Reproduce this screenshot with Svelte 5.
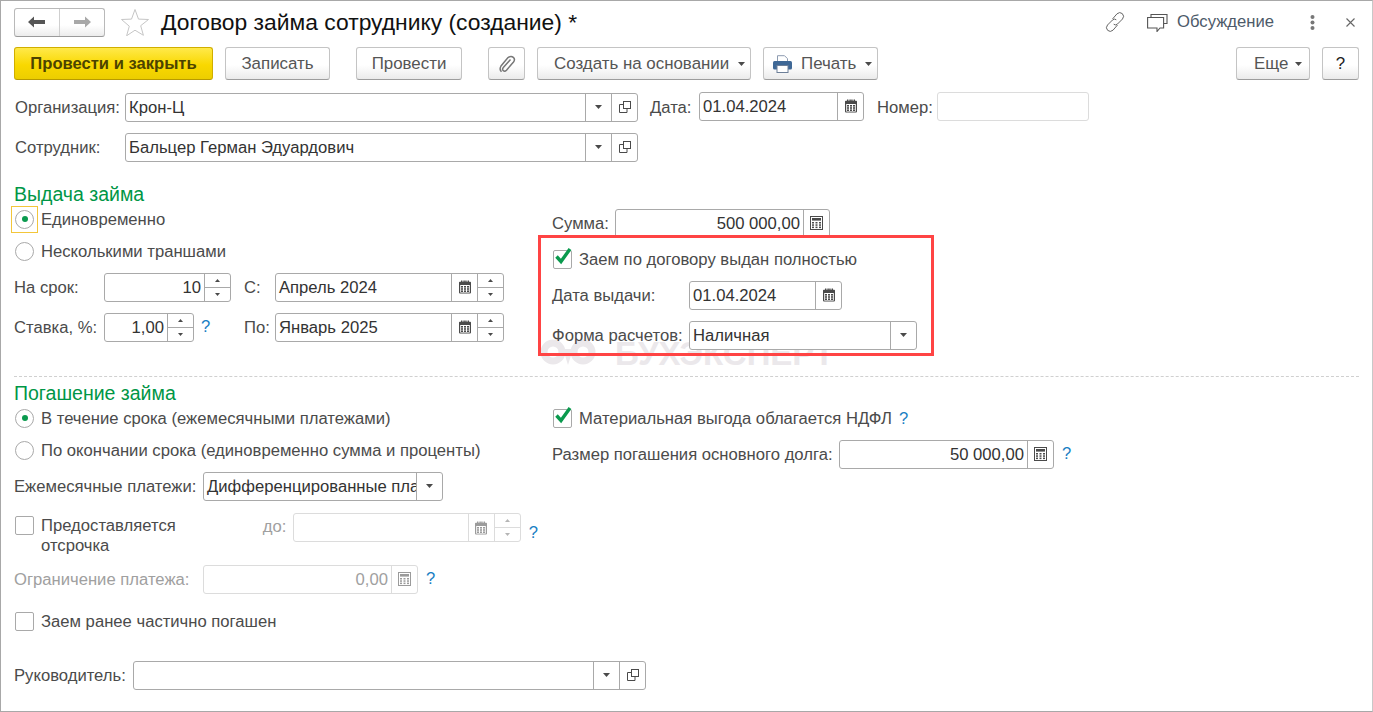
<script>
  const tm = 'Единовременно';
</script>

{#snippet caret(c = '#4a4a4a')}
  <svg class="ic" width="7" height="4" viewBox="0 0 7 4"><path d="M0 0h7L3.5 4z" fill={c}/></svg>
{/snippet}
{#snippet cal(c = '#4a4a4a')}
  <svg class="ic" width="14" height="14" viewBox="0 0 14 14"><path fill={c} d="M1 2.5q0-.8.8-.8H3V.5h1.4v1.2h1V.5h1.4v1.2h.5V.5h1.3v1.2h1V.5H11v1.2h1.2q.8 0 .8.8v10q0 1-1 1H2q-1 0-1-1z"/><g fill="#fff"><rect x="2.2" y="5" width="9.6" height="7.6"/></g><g fill={c}><rect x="3" y="6" width="2" height="1.6"/><rect x="6" y="6" width="2" height="1.6"/><rect x="9" y="6" width="2" height="1.6"/><rect x="3" y="8.2" width="2" height="1.6"/><rect x="6" y="8.2" width="2" height="1.6"/><rect x="9" y="8.2" width="2" height="1.6"/><rect x="3" y="10.4" width="2" height="1.6"/><rect x="6" y="10.4" width="2" height="1.6"/><rect x="9" y="10.4" width="2" height="1.6"/></g></svg>
{/snippet}
{#snippet calc(c = '#4a4a4a')}
  <svg class="ic" width="13" height="14" viewBox="0 0 13 14"><rect x=".5" y=".5" width="12" height="13" fill="#fff" stroke={c}/><rect x="2" y="2" width="9" height="2.6" fill={c}/><g fill={c}><rect x="2" y="6" width="2" height="1.5"/><rect x="5.5" y="6" width="2" height="1.5"/><rect x="9" y="6" width="2" height="1.5"/><rect x="2" y="8.3" width="2" height="1.5"/><rect x="5.5" y="8.3" width="2" height="1.5"/><rect x="9" y="8.3" width="2" height="1.5"/><rect x="2" y="10.6" width="2" height="1.5"/><rect x="5.5" y="10.6" width="2" height="1.5"/><rect x="9" y="10.6" width="2" height="1.5"/></g></svg>
{/snippet}
{#snippet open()}
  <svg class="ic" width="12" height="12" viewBox="0 0 12 12" fill="none" stroke="#4a4a4a"><rect x="4.5" y=".5" width="7" height="7"/><path d="M4.5 3.5h-4v8h7.5v-4"/></svg>
{/snippet}
{#snippet spin(c = '#4a4a4a')}
  <div class="spin" class:dis={c !== '#4a4a4a'}>
    <div><svg width="5" height="3" viewBox="0 0 5 3"><path d="M0 3h5L2.5 0z" fill={c}/></svg></div>
    <div><svg width="5" height="3" viewBox="0 0 5 3"><path d="M0 0h5L2.5 3z" fill={c}/></svg></div>
  </div>
{/snippet}
{#snippet check(on)}
  <span class="cb">
    {#if on}<svg width="20" height="20" viewBox="0 0 20 20"><path d="M3.5 9.5l4.5 5L17 2" fill="none" stroke="#0a9a4e" stroke-width="3.4"/></svg>{/if}
  </span>
{/snippet}

<div class="page">
  <header class="head">
    <div class="nav">
      <span class="navb"><svg width="18" height="12" viewBox="0 0 18 12"><path d="M0 6l6-5.5V4h11v4H6v3.5z" fill="#555"/></svg></span>
      <span class="navb last"><svg width="18" height="12" viewBox="0 0 18 12"><path d="M18 6l-6-5.5V4H1v4h11v3.5z" fill="#a8a8a8"/></svg></span>
    </div>
    <svg class="star" width="30" height="28" viewBox="0 0 30 28"><path d="M15 1.5l3.5 9.6 10 .4-7.8 6.2 2.7 9.6L15 22.2l-8.4 5.6 2.7-9.6L1.5 11.5l10-.4z" fill="#fff" stroke="#c6c6c6"/></svg>
    <h1>Договор займа сотруднику (создание) *</h1>
    <div class="head-r">
      <svg class="link" width="22" height="22" viewBox="0 0 22 22" fill="none" stroke="#666" stroke-width="1"><path d="M8.5 8l4.5-5.2q2.7-2.4 5.3-.2 2.6 2.6.2 5.4l-5 5q-2.2 1.8-3.8.2"/><path d="M13.5 14L9 19.2q-2.7 2.4-5.3.2-2.6-2.6-.2-5.4l5-5q2.2-1.8 3.8-.2"/></svg>
      <svg class="chat" width="21" height="19" viewBox="0 0 21 19" fill="none" stroke="#555" stroke-width="1.1"><path d="M.6 4.5h16v10.5H13l-3 3.5v-3.5H.6z"/><path d="M4 4.5V1.5h16v9h-3"/></svg>
      <span class="disc">Обсуждение</span>
      <svg class="dots" width="5" height="15" viewBox="0 0 5 15" fill="#777"><circle cx="2.5" cy="2" r="2"/><circle cx="2.5" cy="7.5" r="2"/><circle cx="2.5" cy="13" r="2"/></svg>
      <svg class="close" width="9" height="9" viewBox="0 0 9 9" stroke="#666" stroke-width="1.1"><path d="M.5.5l8 8M8.5.5l-8 8"/></svg>
    </div>
  </header>

  <div class="bar">
    <button class="btn main">Провести и закрыть</button>
    <button class="btn w-zap">Записать</button>
    <button class="btn w-prov">Провести</button>
    <button class="btn w-clip"><svg width="18" height="20" viewBox="0 0 18 20" fill="none" stroke="#777" stroke-width="1.5"><path d="M12.5 5.5l-7.2 8q-1.5 2 0 3.2t3.2-.5l7-8.2q2-2.7-.2-4.6T10 3.6l-7 8.4q-2 3.5.5 5.8"/></svg></button>
    <button class="btn w-create">Создать на основании<span class="cr">{@render caret()}</span></button>
    <button class="btn w-print"><svg class="pr" width="19" height="18" viewBox="0 0 19 18"><path d="M4.5 6V.7h7l3 3V6" fill="#fff" stroke="#8d9bb0"/><rect x="0" y="6" width="19" height="8.5" rx="1.5" fill="#3f6896"/><rect x="4" y="10.5" width="11" height="7" fill="#fff" stroke="#6d7f98"/></svg>Печать<span class="cr">{@render caret()}</span></button>
    <span class="grow"></span>
    <button class="btn w-more">Еще<span class="cr">{@render caret()}</span></button>
    <button class="btn w-help">?</button>
  </div>

  <div class="row r-org">
    <span class="lab l-org">Организация:</span>
    <div class="f w-org"><span class="v">Крон-Ц</span><span class="s">{@render caret()}</span><span class="s">{@render open()}</span></div>
    <span class="lab l-date">Дата:</span>
    <div class="f w-date"><span class="v">01.04.2024</span><span class="s">{@render cal()}</span></div>
    <span class="lab l-num">Номер:</span>
    <div class="f off w-num"></div>
  </div>
  <div class="row r-emp">
    <span class="lab l-org">Сотрудник:</span>
    <div class="f w-org"><span class="v">Бальцер Герман Эдуардович</span><span class="s">{@render caret()}</span><span class="s">{@render open()}</span></div>
  </div>

  <h2 class="sec s1">Выдача займа</h2>
  <div class="cols c1">
    <div class="colL">
      <label class="ln rad1"><span class="focus"><span class="rb on"></span></span>{tm}</label>
      <label class="ln rad2"><span class="rb"></span>Несколькими траншами</label>
      <div class="row r-term">
        <span class="lab l-term">На срок:</span>
        <div class="f w-term"><span class="v r">10</span>{@render spin()}</div>
        <span class="lab l-c">С:</span>
        <div class="f w-per"><span class="v">Апрель 2024</span><span class="s">{@render cal()}</span>{@render spin()}</div>
      </div>
      <div class="row r-rate">
        <span class="lab l-rate">Ставка, %:</span>
        <div class="f w-rate"><span class="v r">1,00</span>{@render spin()}</div>
        <span class="q q-rate">?</span>
        <span class="lab l-c">По:</span>
        <div class="f w-per"><span class="v">Январь 2025</span><span class="s">{@render cal()}</span>{@render spin()}</div>
      </div>
    </div>
    <div class="colR">
      <div class="row r-sum">
        <span class="lab l-sum">Сумма:</span>
        <div class="f w-sum"><span class="v r">500 000,00</span><span class="s">{@render calc()}</span></div>
      </div>
      <div class="wm">
        <svg width="58" height="30" viewBox="0 0 58 30" fill="none" stroke="#ebe8eb" stroke-width="7"><circle cx="14" cy="13" r="9"/><circle cx="44" cy="13" r="9"/><path d="M24 10l5 16 5-16" fill="#ebe8eb" stroke="none"/></svg>
        <span>БУХЭКСПЕРТ</span>
      </div>
      <div class="mark">
        <label class="ln chk">{@render check(true)}Заем по договору выдан полностью</label>
        <div class="row r-iss">
          <span class="lab l-iss">Дата выдачи:</span>
          <div class="f w-iss"><span class="v">01.04.2024</span><span class="s">{@render cal()}</span></div>
        </div>
        <div class="row r-form">
          <span class="lab l-iss">Форма расчетов:</span>
          <div class="f w-form"><span class="v">Наличная</span><span class="s">{@render caret()}</span></div>
        </div>
      </div>
    </div>
  </div>

  <hr class="dash" />

  <h2 class="sec s2">Погашение займа</h2>
  <div class="cols c2">
    <div class="colL">
      <label class="ln rad3"><span class="rb on"></span>В течение срока (ежемесячными платежами)</label>
      <label class="ln rad4"><span class="rb"></span>По окончании срока (единовременно сумма и проценты)</label>
      <div class="row r-pay">
        <span class="lab l-pay">Ежемесячные платежи:</span>
        <div class="f w-pay"><span class="v clip">Дифференцированные платежи</span><span class="s">{@render caret()}</span></div>
      </div>
      <div class="r-def">
        <label class="ln2">{@render check(false)}<span>Предоставляется<br />отсрочка</span></label>
        <span class="lab dis l-to">до:</span>
        <div class="f off w-to"><span class="v"></span><span class="s">{@render cal('#9b9b9b')}</span>{@render spin('#b5b5b5')}</div>
        <span class="q q-to">?</span>
      </div>
      <div class="row r-lim">
        <span class="lab dis l-pay">Ограничение платежа:</span>
        <div class="f off w-lim"><span class="v r dis">0,00</span><span class="s">{@render calc('#9b9b9b')}</span></div>
        <span class="q q-lim">?</span>
      </div>
      <label class="ln chk2">{@render check(false)}Заем ранее частично погашен</label>
      <div class="row r-boss">
        <span class="lab l-boss">Руководитель:</span>
        <div class="f w-boss"><span class="v"></span><span class="s">{@render caret()}</span><span class="s">{@render open()}</span></div>
      </div>
    </div>
    <div class="colR">
      <label class="ln chk3">{@render check(true)}Материальная выгода облагается НДФЛ<span class="q q-ndfl">?</span></label>
      <div class="row r-size">
        <span class="lab l-size">Размер погашения основного долга:</span>
        <div class="f w-size"><span class="v r">50 000,00</span><span class="s">{@render calc()}</span></div>
        <span class="q q-lim">?</span>
      </div>
    </div>
  </div>
</div>

<style>
  :global(body) { margin: 0; background: #fff; }
  .page {
    box-sizing: border-box; width: 1373px; height: 712px; overflow: hidden;
    border: 1px solid #a8a8a8; border-right-color: #c8c8c8;
    padding: 6px 13px 0 13px; position: relative;
    font: 16.65px/20px "Liberation Sans", Arial, sans-serif; color: #4b4b4b;
  }
  .head { display: flex; align-items: center; height: 30px; }
  .nav {
    display: flex; width: 91px; height: 29px; box-sizing: border-box; border: 1px solid #b9b9b9; border-bottom-color: #9a9a9a;
    border-radius: 3px; background: linear-gradient(#fff 60%, #ececec);
  }
  .navb { width: 45px; display: flex; align-items: center; justify-content: center; border-right: 1px solid #cfcfcf; }
  .navb.last { border-right: 0; }
  .star { margin-left: 15px; }
  h1 { margin: 0 0 0 11px; font-size: 22.85px; font-weight: 400; line-height: 30px; color: #111; white-space: nowrap; }
  .head-r { margin-left: auto; display: flex; align-items: center; padding-right: 4px; }
  .link { margin-right: 21px; }
  .chat { margin-right: 9px; }
  .disc { color: #4d5a6a; margin-right: 36px; }
  .dots { margin-right: 31px; }

  .bar { display: flex; margin-top: 10px; height: 33px; padding-right: 0; }
  .grow { flex: 1; }
  .btn {
    box-sizing: border-box; height: 33px; padding: 0; margin: 0 12px 0 0; font: inherit; font-size: 16.9px;
    color: #555; border: 1px solid #c4c4c4; border-bottom-color: #9d9d9d; border-radius: 3px;
    background: linear-gradient(#fff 55%, #ebebeb); display: flex; align-items: center; justify-content: center; white-space: nowrap;
  }
  .main {
    width: 199px; font-weight: 700; font-size: 16.6px; color: #4c4300;
    border-color: #d0ae00; border-bottom-color: #b89a00; background: linear-gradient(#ffe94a, #f9d800 55%, #ecce00);
  }
  .w-zap { width: 105px; margin-right: 26px; }
  .w-prov { width: 106px; margin-right: 26px; }
  .w-clip { width: 37px; }
  .w-create { width: 214px; justify-content: flex-start; padding-left: 16px; }
  .w-print { width: 115px; justify-content: flex-start; padding-left: 9px; }
  .w-more { width: 74px; color: #555; justify-content: flex-start; padding-left: 17px; }
  .w-help { width: 37px; margin-right: 0; color: #222; font-weight: 400; }
  .cr { margin-left: 9px; display: inline-flex; }
  .w-more .cr { margin-left: 7px; }
  .pr { margin-right: 9px; }

  .row { display: flex; align-items: center; height: 28px; }
  .lab { white-space: nowrap; flex: none; padding-top: 2px; }
  .r-org { margin-top: 13px; }
  .r-emp { margin-top: 12px; }
  .l-org { width: 111px; padding-left: 1px; box-sizing: border-box; }
  .w-org { width: 513px; }
  .l-date { margin-left: 12px; width: 49px; }
  .w-date { width: 165px; margin-top: -2px; }
  .l-num { margin-left: 13px; width: 60px; }
  .w-num { width: 152px; margin-top: -2px; }

  .f {
    box-sizing: border-box; height: 29px; display: flex; flex: none; background: #fff;
    border: 1px solid #a9a9a9; border-radius: 3px; color: #333;
  }
  .f.off { border-color: #dcdcdc; }
  .v { flex: 1; min-width: 0; padding: 0 3px; line-height: 27px; white-space: nowrap; overflow: hidden; }
  .v.r { text-align: right; }
  .v.clip { overflow: hidden; }
  .s { width: 25px; flex: none; border-left: 1px solid #a9a9a9; display: flex; align-items: center; justify-content: center; }
  .off .s { border-left-color: #dcdcdc; }
  .ic { display: block; }
  .spin { width: 25px; flex: none; border-left: 1px solid #a9a9a9; display: flex; flex-direction: column; }
  .spin.dis { border-left-color: #dcdcdc; }
  .spin > div { flex: 1; display: flex; align-items: center; justify-content: center; }
  .spin > div + div { border-top: 1px solid #a9a9a9; }
  .spin.dis > div + div { border-top-color: #dcdcdc; }

  .sec { margin: 0; font-size: 19.5px; font-weight: 400; line-height: 22px; color: #009646; }
  .s1 { margin-top: 22px; }
  .cols { display: flex; }
  .colL { width: 524px; flex: none; }
  .colR { position: relative; flex: 1; padding-left: 0; }

  .ln { display: flex; align-items: center; box-sizing: border-box; height: 22px; padding-top: 2px; white-space: nowrap; }
  .rb {
    box-sizing: border-box; width: 19px; height: 19px; border-radius: 50%; border: 1px solid #a9a9a9; margin: -2px 7px 0 1px; flex: none;
    display: flex; align-items: center; justify-content: center; background: #fff;
  }
  .rb.on::after { content: ""; width: 6px; height: 6px; border-radius: 50%; background: #0a9a4e; }
  .focus { display: flex; width: 27px; height: 27px; box-sizing: border-box; border: 1px solid #f3c63a; margin: -5px 3px -3px -3px; align-items: center; }
  .focus .rb { margin: 0 0 0 3px; }
  .rad1 { margin-top: 3px; }
  .rad2 { margin-top: 10px; }
  .r-term { margin-top: 11px; }
  .r-rate { margin-top: 12px; }
  .l-term { width: 90px; }
  .w-term { width: 127px; }
  .l-c { margin-left: 13px; width: 31px; }
  .w-per { width: 229px; }
  .l-rate { width: 90px; }
  .w-rate { width: 90px; }
  .q { color: #1a7fc4; font-weight: 400; }
  .q-rate { width: 43px; margin-left: 7px; }
  .r-rate .l-c { margin-left: 0; }

  .r-sum { margin-top: 4px; margin-left: 14px; }
  .l-sum { width: 63px; }
  .w-sum { width: 215px; }
  .mark {
    box-sizing: border-box; width: 396px; height: 121px; margin-top: -2px; border: 3px solid #f44; position: relative;
    padding: 9px 0 0 11px;
  }
  .chk { height: 24px; }
  .cb {
    box-sizing: border-box; width: 19px; height: 19px; border: 1px solid #a9a9a9; border-radius: 2px; margin: -2px 7px 0 1px; flex: none;
    background: #fff; position: relative; display: block;
  }
  .cb svg { position: absolute; left: -1px; top: -4px; }
  .r-iss { margin-top: 10px; }
  .l-iss { width: 137px; }
  .w-iss { width: 153px; }
  .r-form { margin-top: 12px; }
  .w-form { width: 228px; }
  .wm { position: absolute; left: 1px; top: 134px; display: flex; align-items: center; color: #ebe8eb; font-weight: 700; font-size: 33px; line-height: 30px; gap: 18px; }

  .dash { border: 0; border-top: 1px dashed #d0d0d0; margin: 0; height: 0; }
  .c1 { height: 171px; }
  .s2 { margin-top: 5px; }
  .rad3 { margin-top: 3px; }
  .rad4 { margin-top: 10px; }
  .r-pay { margin-top: 11px; }
  .l-pay { width: 189px; }
  .w-pay { width: 240px; }
  .r-def { display: flex; margin-top: 13px; height: 40px; }
  .ln2 { display: flex; width: 249px; padding-top: 3px; line-height: 20px; align-items: flex-start; }
  .ln2 .cb { margin-top: 0; }
  .l-to { width: 30px; line-height: 28px; padding-top: 0; }
  .dis { color: #a0a0a0; }
  .w-to { width: 228px; }
  .q-to { margin-left: 8px; line-height: 40px; }
  .r-lim { margin-top: 12px; }
  .w-lim { width: 215px; }
  .q-lim { margin-left: 8px; }
  .chk2 { margin-top: 17px; }
  .r-boss { margin-top: 29px; }
  .l-boss { width: 119px; }
  .w-boss { width: 513px; }

  .chk3 { margin-left: 14px; margin-top: 3px; }
  .q-ndfl { margin-left: 7px; }
  .r-size { margin-left: 14px; margin-top: 11px; }
  .l-size { width: 287px; }
  .w-size { width: 215px; }
</style>
